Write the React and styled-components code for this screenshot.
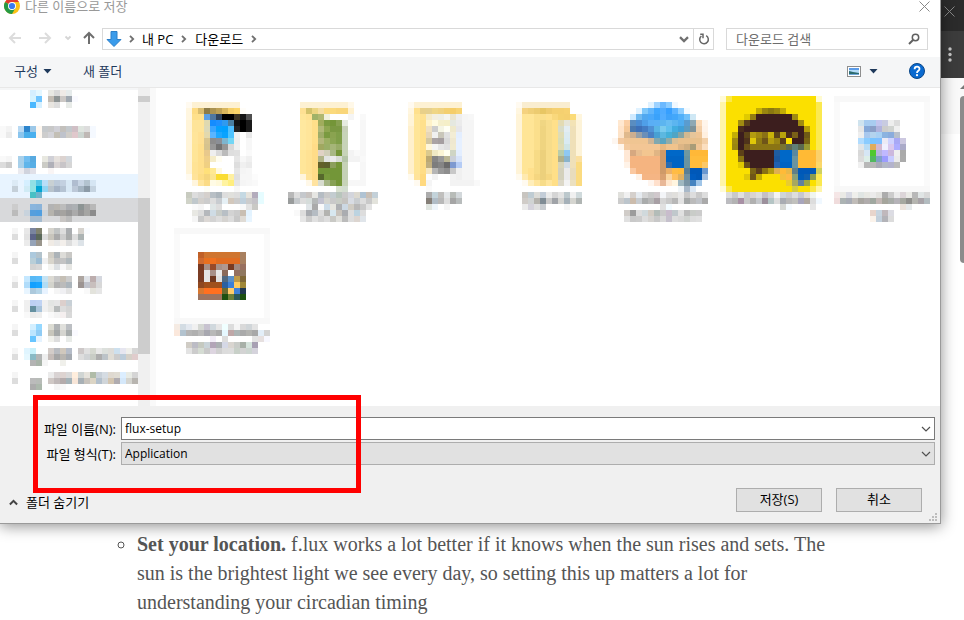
import React, { useState } from 'react';
import styled, { createGlobalStyle } from 'styled-components';

const GlobalStyle = createGlobalStyle`
  * {
    box-sizing: border-box;
  }
  body {
    margin: 0;
    background: #fff;
    overflow: hidden;
    color: #000;
    font-family: 'Open Sans', 'Noto Sans CJK KR', sans-serif;
    font-size: 13px;
    line-height: 18px;
  }
  button,
  input,
  select {
    font: inherit;
    color: inherit;
    margin: 0;
  }
  svg {
    display: block;
    flex: none;
  }
`;

const CELL = 6;

// Every row is a list of colours, "fff*3" repeats one and "." leaves a gap.
const parseRow = (row) =>
  row
    .split(' ')
    .filter(Boolean)
    .flatMap((token) => {
      const [color, times] = token.split('*');
      return Array(Number(times || 1)).fill(color);
    });

const Mosaic = ({ rows, cols, top = 0, left = 0 }) => (
  <svg
    width={cols * CELL}
    height={(rows.length + top) * CELL}
    shapeRendering="crispEdges"
    aria-hidden="true"
  >
    {rows.map((row, y) =>
      parseRow(row).map((color, x) =>
        color === '.' ? null : (
          <rect
            key={`${x}-${y}`}
            x={(x + left) * CELL}
            y={(y + top) * CELL}
            width={CELL}
            height={CELL}
            fill={`#${color}`}
          />
        )
      )
    )}
  </svg>
);

const Page = styled.div`
  display: grid;
  grid-template-columns: minmax(0, 1fr) 23px;
`;

const Dialog = styled.section`
  position: relative;
  z-index: 1;
  background: #fff;
  border-right: 1px solid #9a9a9a;
  border-bottom: 1px solid #9a9a9a;
  box-shadow: 0 2px 14px rgba(0, 0, 0, 0.45);
`;

const TitleBar = styled.header`
  display: flex;
  align-items: center;
  gap: 5px;
  height: 12px;
  margin-bottom: 16px;
  padding: 0 10px 0 4px;
  color: #999;
`;

const Title = styled.span`
  flex: 1;
`;

const IconButton = styled.button`
  display: flex;
  align-items: center;
  justify-content: center;
  width: ${(props) => props.$width}px;
  height: ${(props) => props.$height || 20}px;
  padding: 0;
  border: 0;
  background: none;
`;

const NavBar = styled.nav`
  display: flex;
  height: 22px;
  margin-bottom: 7px;
  padding-right: 12px;
`;

const Address = styled.div`
  flex: 1;
  display: flex;
  align-items: center;
  border: 1px solid #d9d9d9;
  padding-left: 3px;
`;

const Crumb = styled.a`
  color: #000;
  text-decoration: none;
`;

const CrumbArrow = styled.span`
  display: flex;
  justify-content: center;
  width: ${(props) => props.$width || 22}px;
`;

const Spacer = styled.span`
  flex: 1;
`;

const Refresh = styled.span`
  border-left: 1px solid #d9d9d9;
`;

const Search = styled.label`
  display: flex;
  align-items: center;
  width: 202px;
  margin-left: 12px;
  padding: 0 7px 0 9px;
  border: 1px solid #d9d9d9;
`;

const SearchInput = styled.input`
  flex: 1;
  min-width: 0;
  padding: 0;
  border: 0;
  outline: 0;
  background: none;
  &::placeholder {
    color: #6d6d6d;
    opacity: 1;
  }
`;

const Toolbar = styled.div`
  display: flex;
  align-items: center;
  height: 31px;
  padding: 0 15px 2px 14px;
  background: #f5f6f7;
  border-bottom: 1px solid #e8e8e8;
`;

const ToolButton = styled.button`
  display: flex;
  align-items: center;
  gap: 5px;
  margin-right: ${(props) => props.$gap || 0}px;
  padding: 0;
  border: 0;
  background: none;
  color: #1e395b;
`;

const Body = styled.div`
  display: flex;
  height: 318px;
  overflow: hidden;
`;

const Tree = styled.ul`
  width: 138px;
  margin: 0;
  padding: 0;
  border-top: 2px solid #f5f6f7;
  list-style: none;
`;

const TreeItem = styled.li`
  height: ${(props) => props.$height || 24}px;
  background: ${(props) => props.$background || 'none'};
`;

const Track = styled.div`
  width: 18px;
  margin-right: 12px;
  padding-top: 8px;
  background: #f0f0f0;
  border-right: 6px solid #f9f9f9;
`;

const TrackArrow = styled.div`
  height: 6px;
  margin-bottom: 96px;
  background: #cdcdcd;
`;

const TrackThumb = styled.div`
  height: 156px;
  background: #cdcdcd;
`;

const Files = styled.ul`
  flex: 1;
  display: grid;
  grid-template-columns: repeat(auto-fill, 108px);
  grid-auto-rows: 132px;
  margin: 0;
  padding: 8px 0 0;
  list-style: none;
`;

const File = styled.li`
  height: 132px;
`;

const Footer = styled.form`
  position: relative;
  padding: 11px 5px 11px 0;
  background: #f0f0f0;
`;

const Field = styled.div`
  display: flex;
  align-items: center;
  height: 23px;
  margin-bottom: ${(props) => props.$gap}px;
`;

const FieldLabel = styled.label`
  width: 121px;
  padding-right: 5px;
  text-align: right;
`;

const Combo = styled.div`
  flex: 1;
  display: grid;
  align-items: center;
  height: 23px;
  border: 1px solid ${(props) => (props.$filled ? '#adadad' : '#7a7a7a')};
  background: ${(props) => (props.$filled ? '#e1e1e1' : '#fff')};
  font-size: 12px;
  > * {
    grid-area: 1 / 1;
  }
  > svg {
    justify-self: end;
    margin-right: 3px;
    pointer-events: none;
  }
`;

const NameInput = styled.input`
  width: 100%;
  height: 20px;
  padding: 0 20px 0 3px;
  border: 0;
  outline: 0;
  background: none;
`;

const TypeSelect = styled.select`
  width: 100%;
  height: 20px;
  padding: 0 20px 0 3px;
  border: 0;
  outline: 0;
  appearance: none;
  background: none;
`;

const Actions = styled.div`
  display: flex;
  align-items: center;
  gap: 14px;
  padding-right: 13px;
`;

const HideFolders = styled.button`
  display: flex;
  align-items: center;
  gap: 8px;
  margin-right: auto;
  padding: 4px 0 0 9px;
  border: 0;
  background: none;
`;

const PushButton = styled.button`
  width: 86px;
  height: 24px;
  padding: 0 0 2px;
  border: 1px solid #adadad;
  background: #e1e1e1;
`;

const Grip = styled.div`
  position: absolute;
  right: 3px;
  bottom: 2px;
`;

const Highlight = styled.div`
  position: absolute;
  top: -11px;
  left: 33px;
  width: 328px;
  height: 98px;
  border: 5px solid #f00;
  pointer-events: none;
`;

const BrowserEdge = styled.aside`
  display: flex;
  flex-direction: column;
  overflow: hidden;
`;

const TabStrip = styled.div`
  height: 31px;
  padding: 6px 0 0 3px;
  background: #2b2b2b;
`;

const BrowserBar = styled.div`
  height: 47px;
  padding: 16px 0 0 7px;
  background: #3c3c3c;
`;

const PageEdge = styled.div`
  flex: 1;
  display: flex;
  flex-direction: column;
  align-items: flex-end;
  padding-top: 7px;
  background: linear-gradient(#f9f9f9 56px, #fff 56px);
`;

const PageThumb = styled.div`
  width: 4px;
  height: 167px;
  margin-top: 7px;
  border-radius: 4px 0 0 4px;
  background: #8b8b8b;
`;

const Article = styled.article`
  grid-column: 1 / -1;
  padding: 6px 20px 0 137px;
  color: #555;
  font-family: Georgia, 'Liberation Serif', serif;
  font-size: 20px;
  line-height: 29px;
`;

const Tips = styled.ul`
  max-width: 704px;
  margin: 0;
  padding: 0;
  list-style: circle;
`;

const Chevron = ({ size = 8, d = 'M2 0.8 5.2 4 2 7.2', color = '#707070', width = 1.8 }) => (
  <svg width={size} height={size} viewBox="0 0 8 8" fill="none" stroke={color} strokeWidth={width}>
    <path d={d} />
  </svg>
);

const Arrow = ({ color, rotate = 0 }) => (
  <svg width="14" height="14" viewBox="0 0 14 14" fill="none" stroke={color} strokeWidth="2">
    <path d="M13 7H2M7 2 2 7l5 5" transform={`rotate(${rotate} 7 7)`} />
  </svg>
);

const Caret = () => (
  <svg width="9" height="5" viewBox="0 0 9 5" fill="#1e395b">
    <path d="M0.500 0h8L4.500 4.500z" />
  </svg>
);

const Cross = ({ color }) => (
  <svg width="11" height="11" viewBox="0 0 11 11" stroke={color} fill="none">
    <path d="M0.500 0.500l10 10M10.500 0.500l-10 10" />
  </svg>
);

const ComboArrow = () => (
  <svg width="10" height="8" viewBox="0 0 10 8" fill="none" stroke="#505050" strokeWidth="1.2">
    <path d="M1 2l4 4 4-4" />
  </svg>
);

const ChromeLogo = () => (
  <svg width="16" height="16" viewBox="0 0 16 16">
    <circle cx="8" cy="8" r="8" fill="#fbc116" />
    <path d="M8 8 1.070 4A8 8 0 0 1 14.930 4H8z" fill="#e33b2e" />
    <path d="M8 8 1.070 4A8 8 0 0 0 8 16l3.460-6z" fill="#269a45" />
    <circle cx="8" cy="8" r="4" fill="#fff" />
    <circle cx="8" cy="8" r="3.100" fill="#3a7bf0" />
  </svg>
);

const DownloadArrow = () => (
  <svg width="16" height="16" viewBox="0 0 16 16">
    <path d="M5 0.500h6v8h4L8 15.500 1 8.500h4z" fill="#3a9bea" stroke="#2b7fc9" />
  </svg>
);

const RefreshIcon = () => (
  <svg width="12" height="12" viewBox="0 0 12 12" fill="none" stroke="#666" strokeWidth="1.500">
    <path d="M8.200 2.700A4.300 4.300 0 1 1 3.400 3" />
    <path d="M2.200 1.200H5v4" />
  </svg>
);

const SearchIcon = () => (
  <svg width="12" height="12" viewBox="0 0 12 12" fill="none" stroke="#606060">
    <circle cx="7.500" cy="4.500" r="3.200" strokeWidth="1.500" />
    <path d="M5 7 1 11" strokeWidth="2" />
  </svg>
);

const ViewIcon = () => (
  <svg width="14" height="11" viewBox="0 0 14 11">
    <rect x="0.500" y="0.500" width="13" height="10" fill="#fff" stroke="#8e8e8e" />
    <rect x="2" y="2" width="10" height="7" fill="#b5dcf8" />
    <path d="M2 2h10v2H2z" fill="#5b9be8" />
    <path d="M2 5l4 1 6 1v2H2z" fill="#2c6b6f" />
    <path d="M2 8h10v1H2z" fill="#6fa7d8" />
  </svg>
);

const HelpIcon = () => (
  <svg width="16" height="16" viewBox="0 0 16 16">
    <circle cx="8" cy="8" r="7.500" fill="#0a6ad0" stroke="#0b4788" />
    <path
      d="M5.600 6.200c0-3.400 5-3.200 4.900-.3C10.500 7.800 8 7.700 8 9.900"
      fill="none"
      stroke="#fff"
      strokeWidth="1.800"
    />
    <circle cx="8" cy="12.200" r="1.100" fill="#fff" />
  </svg>
);

const MenuDots = () => (
  <svg width="4" height="16" viewBox="0 0 4 16" fill="#c8c8c8">
    <circle cx="2" cy="2" r="1.700" />
    <circle cx="2" cy="7.500" r="1.700" />
    <circle cx="2" cy="13" r="1.700" />
  </svg>
);

const GripDots = () => (
  <svg width="8" height="8" viewBox="0 0 8 8" fill="#bdbdbd">
    <path d="M6 0h2v2H6zM3 3h2v2H3zM6 3h2v2H6zM0 6h2v2H0zM3 6h2v2H3zM6 6h2v2H6z" />
  </svg>
);

const treeItems = [
  {
    height: 30,
    top: 0,
    rows: [
      '.*5 d6efff e5f7ff .*1 e8e8e3 d9d9d9 efeae6 e6ebeb',
      '.*5 d6f3ff 70c5ff . c3bcb3 8e9494 ccc8c5 a0a8b0 fafaff',
      '.*5 4ab8ff d6f0ff . e8e5e0 ddd . e8ebe8',
    ],
  },
  {
    height: 30,
    top: 1,
    rows: [
      'f9f9f9 f3f3f3 . b8d9f3 2c84cc 9cc8e8 fff8f0 c5c9cc c8c8c8 d0d0d6 c3c0bc c3c8cc d0bfc5 dfe5df ddd f5f9ff',
      'f9f9f9 ebebeb . 8ac5ee 48aeea 4ab0ee fff8f0 cdcdcd d3d3d8 c3bfb5 bfc3cc d0cdc8 e0c8cc ccd5d0 bfb8b5 f5f9ff',
    ],
  },
  {
    top: 1,
    rows: [
      'f9f9f9 f5f5f5 . a8d0ea 70bdf0 58aae0 . e8e8e0 d0d0d6 e6e1dd dcd3d0 d3d8dd',
      'dcdcdc ccc . a8d0ea 60b5ea 58aee5 . cbcbc5 b0b0b8 d9d3d3 c8c5c8 d6d6d6',
      '.*3 ebebf0 d0d3dd e0e0e8 .*2 f9f5f5',
    ],
  },
  {
    background: '#e8f4ff',
    top: 1,
    rows: [
      '.*2 dceaf5 . d5efff 90e0e5 58c8e5 b8def8 c8d0d3 bccada c3d0e0 d8e8f5 b0bdd0 c8d5e5 b3c3d0 d5e5f3',
      '.*2 c5d0d9 . d0ebf5 90e3e3 00a5d3 90d5f3 b8c3cc a5b3c5 b5c3d3 d8e8f5 bcc8d8 a5b5c3 8c9ba8 c5d3e0',
      '.*5 48c0c5 70b3cc',
    ],
  },
  {
    background: '#d8d9db',
    top: 1,
    rows: [
      '.*2 ccc .*2 8ab5dd 8ab3d9 . b3b3b3 b8b5b0 bcbcbc aaacb0 acb0b3 8c9494 a5a5a5 b8b8b8',
      '.*2 bbb . c8d3dd 559fdd 509fe0 ccd3d9 b5b3ad a0a0a0 a5a3a0 999 aaa 959595 a5a5a3 8c8c8c',
      '.*5 a5bcd0 a5bcd0 .*3 c8c5c3 bbb',
    ],
  },
  {
    top: 1,
    rows: [
      '.*2 f5f5f5 . e8e8e8 7a859f 80826f . d5d3cc c0c3c3 ddd aaadb0 . d6d3ce fafcff',
      '.*2 ddd . e3e3e3 5c6488 5a6859 ddd c8c5bc aaa cdcdcd aaacac ddd acb3b3',
      '.*4 ebebeb 95a3b8 99958c . f0ebe5 e8e8e8 f3efeb ddd f0f0f0 dde3e8',
    ],
  },
  {
    top: 1,
    rows: [
      '.*2 f5f5f5 .*2 acc9dd b3c3cc . d0cdc5 acb3b8 dddcd8 c9c8c5',
      '.*2 ddd .*2 b8ced8 9cbcd3 f0f0f0 d8d5cc c0c0c0 c3c3c3 b0b8bc',
      '.*5 d3d3d3 d8d8d8 . f3f3f0 dce0e3 f8f8f8 e6e6e3',
    ],
  },
  {
    top: 1,
    rows: [
      '.*2 f5f5f5 . c5e8ff 58b9f5 5abcfa c5e3f3 dcdad3 c8c8c8 c5bfb5 ccc . ada5a0 e0e3e8 bcadad d5d8df',
      '.*2 ddd . b0dcfa 12a0ff 18a5ff b0dcf5 d3d3cc b3b3b3 bbb acb5bc . 9c9492 c0c3cc c8bfbd d8d8d8',
      '.*4 e8f5ff acc9dc b5d5e8 e8f3ff . f5f5f5 f0f0f3 e3e3e3 .*2 f9f9f9 e3e3dc e6e6e6',
    ],
  },
  {
    top: 1,
    rows: [
      '.*2 f5f5f5 . f0f0f0 bdd0f3 c0d3f3 f0f0f0 e3e5e3 e6e6e6 dccfcc c8d0d6',
      '.*2 ddd . f0f0f0 6590a0 aac5dc f0f0f0 e8e8e5 b8bcbc ddd d5d5d5',
      '.*4 f9f9f9 ebebeb eee . f9f9f9 f3f3f3 f5efef d9d9d9',
    ],
  },
  {
    top: 1,
    rows: [
      '.*2 f5f5f5 .*2 d3efff 95d8ff . dcdcd3 b0b3b5 e0e0dc bcbfc3',
      '.*2 ddd .*2 bce5ff 90ccf5 . c8c6bc a5a8a8 d5d5d0 a8adad fafaff',
      '.*5 68c5ff e5f3ff . f0f0eb ddd . e8ebe8',
    ],
  },
  {
    top: 1,
    rows: [
      '.*2 f5f5f5 . e0f5ff c8f0fa .*2 d3ccc8 b8bbc0 d0c8bd b5bcc8 . cdc8c8 e0e0e0 d5d8d0 e8e8e8 dce0dc dddcd8 cde0ee e6e6f0 efefeb d6d6d6',
      '.*2 ddd . e6f8ff 8abac5 b3b5b5 eee c5bcb8 a5a5a5 b8b5b0 a5aab0 . dddddd d0d3d5 c8ccc5 adadad bcc3c8 e0ddd5 ccc bcccda d5d0c8 e0cccc',
      '.*5 b3b3b3 a8b3a8 f5f5f5 .*2 f0f0eb',
    ],
  },
  {
    top: 1,
    rows: [
      '.*2 f5f5f5 .*5 ebebeb d9d3d3 ddd3d0 d9d9d9 ffeedd d0d5d3 e6e3dc b0bca8 c8d0d8 d5dce3 dfd9d0 e0dcd3 dceeff e8ebe5 d5d5d5',
      '.*2 ddd .*2 bbb b8bcb8 . cfc8c5 bfb8b8 b5acac a5b3b8 f8e6d8 a8b0b5 c8c3bc dcd5c5 b3c0cc d0d5d9 d3c5b0 b0acb0 d5e8fa d5d5d0 b8b5b0',
      '.*5 acacac acb8ac .*2 f5f5f5 f9f9f9',
    ],
  },
];

const files = [
  {
    top: 1,
    left: 3,
    rows: [
      'fffaf0 fdf1d3*8',
      'fff6e0 fddb83 d9bd70 8d7c47 ab9350 bea155 d9b75e f5cf69 fdd669 fffdf8',
      'fff6e0 fee08c*2 5aa0e6 4f77a0 2f435c 000*2 3c3423 151515 505050',
      'fff4d8 fee499*2 dfd9b0 148cff 1e90ff 2f9aef 4a7ea0 111 000 1a1a1a',
      'fff4d8 fee499*2 dcd9b8 3aa5ff 05a0ff 00a0ff 4fbfff 222 000 1a1a1a',
      'fff4d8 ffe59a ffe093 e3d9ad 5ab5ff 1ea8ff 08a3ff 4fc4ff f0f0f0 fff e8e8e8',
      'fff4d8 ffe59a ffe093 d9c58f 8c8c8c 8b8f96 7db5cf 73d6f5 eee fff f7f7f7',
      'fff4d8 ffe597 ffdf8c d6c38e 989898 737373 959595 d8d8d8 f0f0f0 fff f7f7f7',
      'fff4d8 ffe597 ffdf8c e8c98c efefef d9d9d9 bbb dedede e0e0e0 fff fafafa',
      'fff4d8 ffe597 ffdf8c efcf88 f5ecc8 fffdf0 fff*2 e6e6e6 f7f7f7 f0f0f0',
      'fff4d8 ffe395 ffdf8c f0d083 fff*4 dedede f0f0f0 ebebeb',
      'fff4d8 ffe395 ffdf8c ffe07a ffe992 fff9e0 fff*2 e6e6e6 f5f5f5 f7f7f7',
      'fffaee ffe39a fddd85 f5d57d fbe590 fadc32*2 fff0a0 e0e0e0 f7f7f7*2 fcfcfc',
      '. fff5dd ffe59c fbdb85 fffbe5 fff9da fff3a0 ffee80 e6e6e6 f5f5f5 f7f7f7 f9f9f9',
      '.*3 fdfdf5 .*4 f7f7f7',
      'c8cbc0 ddd d5d5d5 d5d0cc b8bfc5 acb5bc ddd e0e0dc ddd c5d9e3 e6e3dc b3acbc e6fcff',
      'd0d3c8 c0c8cc d3d0cc ccc ddd c8ccd0 e6f0f5 d3c8bc ccc c0d0dc ccc c5c3c8 e6fcff',
      '. fafafa f5f5f5 . dfe6e6 ddd .*3 f9f9f9 e3e3e3 c9c9c5',
      '. e8e8e3 ddd b5b8bc cfdce5 c8ccc8 b8bfc5 d3d3d3 ccc c9bfb3 e3f3ff',
      '. f5f5f5 c9c9c9 dcd8d5 d3d3d3 ddd d5d3d0 dcdcdc c8c8c8 dfdbd5 e8f5ff',
    ],
  },
  {
    top: 1,
    left: 2,
    rows: [
      '.*2 fdf1d3*8 fff8e8',
      '.*2 fee093 d3c26b ecd581 f5dda0 fbda7d*2 f9d67a*2 fff1cf',
      '.*2 ffe699 ffe293 a0b268 b0b870 f0f0dc fff*3 f5f5f5 fff f9f9f9',
      '.*2 ffe89f ffe59a ffdf8a a0ac5c 7a9a40 749538 86a050 e6ebe0 fff*2 f7f7f7',
      '.*2 ffe89f ffe59a ffdf8a b0b878 8ea650 7a9842*2 c7d0b8 fff*2 f7f7f7',
      '.*2 ffe89f ffe59a ffdf8a 9eac68 7a9a40 8aa350 7f9e48 c7d3b8 fff*2 f7f7f7',
      '.*2 ffe89f ffe59a ffdf8a b3b67b 9caf63 8ba553 7f9e48 c7d3b8 fff*2 f7f7f7',
      '.*2 ffe89f ffe59a ffdc88 a0a860 9aae67 a5b578 98ac68 c7d3b8 fff*2 f7f7f7',
      '.*2 ffe699 ffe293 ffdc88 e0d2c5 d0ceb8 a8b884 759638 c7d3b8 f3f3f3 f9f9f9 f7f7f7',
      '.*2 ffe699 ffe293 ffdc88 b0b488 e2e4e2 ebebeb d8dcd4 b5c5a8 f3f3f3*2 f9f9f9',
      '.*2 ffe699 ffe293 ffdc88 626029 5d5f2c 8c9f5d 759638 c5d1b6 fff*2 f7f7f7',
      '.*2 ffe699 ffe293 ffdc88 739638*4 c5d1b6 fff*2 f7f7f7',
      '.*2 fff5dd ffe39a ffdc88 56682c 789a3c 739638*2 c5d1b6 fff*2 f7f7f7',
      '.*3 fff8e8 ffe3a0 d8dcd0 a5b585 87a055 749538 c7d3b8 f7f7f7*3',
      '.*8 d8e0d0 d3ddd0',
      'b8b8b8 ddd c5c8cc c8c3c0 e6e6e3 b5bcc3 c9c9c9 c3ccd0 b8c5bc c9c9c9 d3d5dc dcd9d0 b0c3d3 c9bfb5 c3d0d8',
      '999c9c c5c9cc ddd d5dcda b5b8b8 c3c3d0 d5d5d0 c9c9c9 c8ccc5 c5c3c0 d8dce3 c9cdd0 ddd c9c9c9 e3e3dc',
      '.*3 e0e5e8 aaa fafafa cddce8 e6e6e0 aeb0b3 ccd8e3 d0ccc3 b8b8b8 c9c9c9 e3e3e3',
      '. f9f9f9 ddd a8abb0 b5bcc3 dcdcdc b3b3b0 d8e8f0 c8c3bc aaacb0 ddd bcd3e0 ddd',
      '.*2 e6e6e6 ccc e0e0e0 d3d3d3 ddd c9c9c5 e0e0dc bbb ddd dcd5d0 e0e5ea',
    ],
  },
  {
    top: 1,
    left: 4,
    rows: [
      'fffaf0 fdf1d3*8',
      'fff6e0 ffe08c e8d08a e6d08e efd686 f0d280 f3cf70 f5cd68 f7d374',
      'fff4d8 ffe597 ffe291 f5ebc8 f3efe0 efefe5 f5f5f0 ebe5ce eee f5f5f5 f7f7f7',
      'fff4d8 ffe597 ffe08c fff2c8 fffbe0 f5efcc f5efc8 e5e8e0 ebebeb f5f5f5*2',
      'fff0cc ffe597 ffe08c efe0c2 cdcdcd f5f5e5 fffff5 efe9cc e6e6ea f5f5f5*2',
      'fff0cc ffe597 ffe08c e6d6b8 f0f0f0 c9c6b9 e0e0e0 f3edd5 e3eeff f5f5f5*2',
      'fff0cc ffe597 ffe08c d3c7a2 aaa3a5 a59ea0 d9d9d9 efe8d0 e6f0ff f5f5f5*2',
      'fff0cc ffe597 ffe08c fff7dc f5f5f5 e6e6e6 e0e0e0 f0ead0 e6f0ff f5f5f5*2',
      'fff0cc ffe597 ffdd86 dbc98e efe9c5 fbf5d5 fffff0 cfd5c5 e3eeff f5f5f5*2',
      'fff0cc ffe597 ffdd86 bba873 858585 999 bab694 cbd0d9 d6e3fa f5f5f5*2',
      'fff0cc ffe597 ffdd86 bfae80 7d7d7d 858585 6b6b6b 7d99d0 b5ccf5 f5f5f5*2',
      'fff0cc ffe597 ffdd86 f5e6c0 b5b5b5 999 8e8e8e c8c8c8 f0f0f0 f5f5f5*2',
      'fffaee ffe39a ffd97e fdfdfd f3f3f3 fff*2 f3f3f3 f0f0f0 f5f5f5*2',
      '. fffaf0 ffd980 f5f5f5 fff*3 f3f3f3*4 f9f9f9',
      '.*3 fafafa',
      '.*3 acacac c3d3da c0bfbd e3e6e8 b8bcb8 d3d8db',
      '.*3 857f78 b0bcc6 b8b8b8 ddd a5a5a5 b8bcbc',
      '.*3 e0e5e0 eef5fb . f5f5f5',
    ],
  },
  {
    top: 1,
    left: 4,
    rows: [
      'fffaf0 f9edd0*8',
      'fff6e0 f5d27f f0cf77 eccb70 e8c663 efcb6e f5d070*2 f7d271',
      'fff4d8 ffe596*2 fbdf8c*2 ffe08a f9d87c f5d270 f5d070 fbdb77 fff6dd',
      'fff4d8 ffe596*2 fbdf8c f0d683 f7dc8a ffe08a e3dbb3 e6e5d8 f3e3b5 fdf3d8',
      'fff4d8 ffe596*2 fbdf8c efd480 f7dc8a ffe08a d9dcc8 e3edf2 efe0b8 fdf3d8',
      'fff4d8 ffe596*2 fbdf8c efd480 f7dc8a ffe08a e0dcb5 dcebf0 efe0b8 fdf3d8',
      'fff4d8 ffe596*2 fbdf8c efd480 f7dc8a ffe08a d9dcb5 d9eaf2 efe0b8 fdf3d8',
      'fff4d8 ffe596*2 fbdf8c efd480 f7dc8a ffe08a e0dcb5 d0e5e5 efe0b8 fdf3d8',
      'fff4d8 ffe596*2 f7db86 ecd07c f7dc8a ffdf88 b8ccab 8ec8f3 efe0b8 fdf3d8',
      'fff4d8 ffe596*2 f7db86 ecd07c f7dc8a ffdf88 b0b08c 8ab4cc efe0b8 fbe0a0',
      'fff4d8 ffe596*2 f7db86 ecd07c f7dc8a ffdf88 d8d5b8 d3dde6 efe0b8 fbdb80',
      'fff4d8 ffe596 ffe08c f7db86 ecd07c f7dc8a ffdf88 d3d0bc eaeaea e8dcbc fbdb80',
      'fffaee ffeab0 ffe08c f5d680 ecd07c f5d680 ffdf88 d3d0bc eaeaea e8dcbc fbdb80',
      '. fffaf0 ffeebb ffe59c f7dc8a ffe59c ffdf88 dcd8c8 f3f3f3 ebe0c0 fbdb80',
      '',
      '. c8c5c0 bfccd3 dcdcd8 c3cdd8 ebebeb d5d5d5 e3e3e3 bcc8cc f0f0f0 d0dadc',
      '. d0ccc8 d0d3d3 b5b3ad 7f8c95 c9c9c9 a0a3a8 d3d3d0 a5b0b8 d5d5d0 b0b5b3',
      '. ebebeb d5d3dc e0e0e0 c8ccd0 .*3 f5f5f5',
    ],
  },
  {
    top: 1,
    left: 2,
    rows: [
      '.*6 e0f2ff 9dd2ff 6cb9ff 8cccff f0f8ff',
      '.*4 e0f2ff 7fc8fb 60b5fb 3da6ff 4fabff 369fff 5cb3ff 90cfff f3faff',
      '.*3 cfeaff 6fb9f0 50a8f0 4aa9fa 3aa2fa 52adff 3fa3fa 42a7fa 50b0fa 6fc0fa cfe8f5',
      '. ffe8d0 fbcfa5 5a8dc0 4a8cd3 4f9fe8 5aaef5 5ab0f5 5cb5f0 68bdf3 5cb5f0 4fadf0 5a9ccf 8fa8b3 fbd9b5 fff5eb',
      '. ffe3c8 f5c898 4a78ad 3d70b8 447cc3 4f92d6 5ab5e5 7acbee 60c0ee 42ade0 3fa0d8 5c9bc0 7f9298 f3cfa8 fff3e8',
      '. fde3c8 e0b98c ccae90 97a0a8 6b8fb8 4a80c3 48a0d3 5cb8e0 45b0d8 4fa5c5 85a5a5 d3b990 e6c59a efc595 fff0e0',
      'fdf6f0 f3c9a0 f0c595 f0c592*3 d0b595 80a8b0 5aa5c0 90aca8 d9bf95 e8c08c*4 f3d0a8',
      '. fff5eb f3caa0 f3c695*5 e8b880 f0c38c*2 dcb585 cfae80 a89c78 efc595 fbdfc0',
      '.*2 ffe8d5 d6a880 e8bd8f f3c690*2 e0b584 cf9a68 0068c8*3 6f98a0 ffb838*3',
      '.*2 ffe8d5 f5b480*5 cf9a68 0064c3*3 6a94a0 ffbc3c*3',
      '.*2 fff3e8 f5b480*5 cf9a68 2a6cb0 0064c3*2 6a94a0 ffbc3c*2 fbc868',
      '.*3 fbc8a0 f5b480*4 cf9a68 ecb068 ffbc45 ffbc3c 5a7f95 0058b8*2 6a98d0',
      '.*4 fff3e8 f5b584*3 d9a070 fbd5a0 ffc060 e0b060 7090a0 005cbf 0058b8 a5c0e0',
      '.*6 fff5ee ffe0cc e8b898 ffe8d0 fff5e0 a0b8c0 7a95a5 4583c0 a0c5e8',
      '.*11 f0f5f8 a8b8c8 dde8f3',
      '. e0e0dc f0f0f0 d5d0cc e6ebf0 d5d5d5 c9c9c9 d0c8cc f3f5f8 ddd e0dfdc e8e8e8 c8c8c8 ddd c9c9c9 ddd',
      '. ccc bcc5cc ccbcac c8ccd0 aaacac b8b8b8 a8a0a5 d5d5d5 c9c9c9 b8b8b8 e3e3e3 a5a8a8 bbb c0c3c8 aaa',
      '.*8 e0e0e0 f3fbff',
      '.*2 d0ccc8 9c9c9c ddd d0d9dc d3ccc3 b3bcb8 c9c9c9 c8bccc c0c8cc e0e0e0 bbb c9ccc8 ccc',
      '.*2 e0e0e0 c9c9c9 ccc ddd d5d3d0 c8c8c8 d9d9d9 c5c0cc ddd d8d8d8 d0d3d0 ddd e0e0e0',
    ],
  },
  {
    left: 2,
    rows: [
      'fffbd8 fbe84a fbe000*14 fffbd0',
      'fff5a8 fbe000*15 fbe94f',
      'fff5a8 fbe000*5 c3ad05 9a860f 8a7810 9a8610 c3ad05 fbe000*5 fbe94f',
      'fff5a8 fbe000*3 e0ca00 947d12 3c1e1e*6 a08b10 fbe000*3 fbe94f',
      'fff5a8 fbe000*2 a08c10 5a3f1a 3c1e1e*8 a08c10 fbe000*2 fbe94f',
      'fff5a8 fbe000*2 4a2c1c 3c1e1e*10 b39d08 fbe000 fbe94f',
      'fff5a8 fbe000 c3ad05 3c1e1e 5c4418 b39c10 a08810 8a7015 c8b20a 5c4418 b8a20c 4a2c1c 7a6018 3c1e1e 6f5a15 fbe000 fbe94f',
      'fff5a8 fbe000 a08a10 3c1e1e 4f331b e0c808 8f7a12 6f5518 b39c10 9a8512 5a3f1a fbe000 3c1e1e*2 7a6512 fbe000 fbe94f',
      'fff5a8 fbe000 9a8610 3c1e1e 6a5018 8a7414*5 7a7430 5f6a50 5f7f78 5a6a50 9a9a30 fbe000 fbe94f',
      'fff5a8 fbe000*2 5c4018 3c1e1e*5 1f5ca0 0068c8*2 5a88a0 ffba35*3 fbd06a',
      'fff5a8 fbe000*2 8a7412 3c1e1e*5 1a58a0 0068c8*2 6a94a0 ffba35*3 fbd06a',
      'fff5a8 fbe000*2 e0c800 6a5018 3c1e1e*4 2060b0 0064c3*2 6a94a0 ffba35*3 fbd86a',
      'fff5a8 fbe000*4 7a6415 5a3c1c 8a7212 b39c10 dfb050 ffba38 e8b848 607f88 0058b8*3 cfd060',
      'fff5a8 fbe000*3 e0c808 6f5518 c3ad05 fbe000*3 f3c040 ffba45 88a078 005cb8 1060b0 8a9c50 fbe94f',
      'fff5a8 fbe000*10 e8cc30 a8a860 6080a0 a0a840 fbe000 fbe94f',
      'fffbd8 fbe84a fbe000*10 d5cc40 fbe000*2 fbe84a fff5a8',
      '. ddd c9c9c9 e0e0e0 c9c9cc d9d3d0 ddd c5c0c5 d3d3d3 f3f3f3 cfd5d8 ccc ddd c8c8d0 e3dcd5 f0f5f0',
      '. bcbcc0 b3b3b3 a890a5 c9c9c9 b0b0b0 c5c8cc 9c909c b5c5c5 ddd a8acb3 b8b8b8 c0c0bc a8a5bc b0a8a0 ddd f0f8ff',
      '.*10 d5d8d5 f5fbff .*3 e6e6e6',
    ],
  },
  {
    left: 3,
    rows: [
      'f8f8f8*16',
      ...Array(3).fill('fafafa fff*14 fafafa'),
      'fafafa fff*3 cfe3ee a8ccf0*2 c3c5ee c8cbe0 eee ddd fff*4 fafafa',
      'fafafa fff*3 e6e6e6 85a8d8 8a9fc8 b0b3dd ccc d0d3d0 f0f0f0 fff*4 fafafa',
      'fafafa fff*3 eee a8c8ee b3d3ee a8d0f3 8cb3e0 8aacdd b8c0cc fff*4 fafafa',
      'fafafa fff*3 b0dcff 8accff 78c3ff 80bfff eceaf5 cfd3ff a8a8f5 ccc8e0 fff*3 fafafa',
      'fafafa fff*3 e0e5e8 b8dcf5 e0ac5c d3b8d0 f0f0ff d9c8ee adadff aaaac8 fff*3 fafafa',
      'fafafa fff*3 d8d8d8 d6e6f5 4fc830 b8b3e0 c0b8ff ccb8dd efefef aaa fff*3 fafafa',
      'fafafa fff*3 dcdcdc ddeee8 52b860 80a0c8 9c9cff c8ccff ebebeb ababab fff*3 fafafa',
      'fafafa fff*3 f0f0f0 b8b8b8*2 aaaab8 b3b8c8 b3b3cc bbb fff*4 fafafa',
      ...Array(3).fill('fafafa fff*14 fafafa'),
      'f8f8f8*16',
      'f5e6e6 eaeae6 d8dae3 efefeb e0e5e3 e8e8e3 ebebeb e3e3e0 acacac ccc ebebeb dcd5d8 eaeae6 b8b8b8 e0e5e5 d9d9d9',
      'f0dcdc acb3b3 a8acb5 c0bcb8 a8a5a0 b0acac a0a8a0 c3b8b5 a5a59c a8aca8 b5b3b8 a5a8a0 8f8f8c b5b5b0 a8a3a8 b3bcc0',
      '.*11 ebe3dc e6eaeb',
      '.*6 e8d5cc c8d5e0 c0b8bc dcdce3',
      '.*6 fbf3eb c3d0dc b3b3b8 dcdcdc',
    ],
  },
  {
    left: 1,
    rows: [
      'f8f8f8*16',
      ...Array(3).fill('fafafa fff*14 fafafa'),
      'fafafa fff*3 c06028 cf7530*6 a88060 fff*3 fafafa',
      'fafafa fff*3 cf6a30 e87020 f07020 e06c22*4 a88060 fff*3 fafafa',
      'fafafa fff*3 783820 a89088 984a2a a89088 b09890 783a22 a08880 987060 fff*3 fafafa',
      'fafafa fff*3 7a3c24 e6e6e6 a89088 e8e8e8 8a6a5a fff 947060 907860 fff*3 fafafa',
      'fafafa fff*3 7a3c24 e6e6e6 703820 e0e0e0 4f6880 5a90c8 c09a48 806838 fff*3 fafafa',
      'fafafa fff*3 8f4820 a0501c*3 2a60a0 3c80d8 ffcc60 a08838 fff*3 fafafa',
      'fafafa fff*3 d87830 ff7020*3 6a6a30 ffcc6a 3f80d8 203850 fff*3 fafafa',
      'fafafa fff*3 9c7460*4 1c5010 6f8038 2c5858 1c5010 fff*3 fafafa',
      ...Array(3).fill('fafafa fff*14 fafafa'),
      'f8f8f8*16',
      'f5ebe3 d3dce3 e3e8ef f0f0f0 d5d8d3 c8c3d0 d0d8dd e6e6e6 f0ffff dcdcdc f5f5f5 d9d9d9 d0d5d8 e3e3e3',
      'fbe8dc b3c3cf b5b5b5 b0b0b0 bbb a8a8b0 b8b8b8 acacac e6f8ff bfa8a8 adb5b5 aaa b3b3b0 a8a8a8 e3eef8 d3d3d3',
      '.*6 f3eef8 . ddd .*4 e3e3e3 e6e0e0 f8f8ff',
      '.*2 d0ccc5 bcbcc5 c5c9c0 c9d3d8 b3a5b8 acb0b3 d5d8e6 d9d5d0 c9ccc8 a8b0a8 d5e3dc a8a0b3',
      '.*2 e3e3e3 ccc d5dcd3 c9c9c9 ddd5e0 d0d0d0 dcdcdc ddd c8d0c8 d3d3d3 ccd5d0 d5d3dc',
    ],
  },
];

export default () => {
  const [fileName, setFileName] = useState('flux-setup');

  return (
    <>
      <GlobalStyle />
      <Page>
        <Dialog role="dialog" aria-label="다른 이름으로 저장">
          <TitleBar>
            <ChromeLogo />
            <Title>다른 이름으로 저장</Title>
            <IconButton $width={11} $height={11} aria-label="닫기">
              <Cross color="#888" />
            </IconButton>
          </TitleBar>

          <NavBar>
            <IconButton $width={30} aria-label="뒤로">
              <Arrow color="#dcdcdc" />
            </IconButton>
            <IconButton $width={30} aria-label="앞으로">
              <Arrow color="#dcdcdc" rotate={180} />
            </IconButton>
            <IconButton $width={16} aria-label="최근 위치">
              <Chevron d="M1.500 2.500 4 5 6.500 2.500" color="#d5d5d5" />
            </IconButton>
            <IconButton $width={26} aria-label="위로">
              <Arrow color="#6e6e6e" rotate={90} />
            </IconButton>
            <Address>
              <DownloadArrow />
              <CrumbArrow $width={20}>
                <Chevron />
              </CrumbArrow>
              <Crumb href="#pc">내 PC</Crumb>
              <CrumbArrow>
                <Chevron />
              </CrumbArrow>
              <Crumb href="#downloads">다운로드</Crumb>
              <CrumbArrow>
                <Chevron />
              </CrumbArrow>
              <Spacer />
              <IconButton $width={18} aria-label="이전 위치">
                <Chevron size={10} d="M0.800 2.500 4 5.700 7.200 2.500" />
              </IconButton>
              <Refresh>
                <IconButton $width={19} aria-label="새로 고침">
                  <RefreshIcon />
                </IconButton>
              </Refresh>
            </Address>
            <Search>
              <SearchInput type="text" placeholder="다운로드 검색" aria-label="다운로드 검색" />
              <SearchIcon />
            </Search>
          </NavBar>

          <Toolbar>
            <ToolButton $gap={31}>
              구성 <Caret />
            </ToolButton>
            <ToolButton>새 폴더</ToolButton>
            <Spacer />
            <ToolButton $gap={29} aria-label="보기">
              <ViewIcon />
              <CrumbArrow $width={14}>
                <Caret />
              </CrumbArrow>
            </ToolButton>
            <IconButton $width={16} aria-label="도움말">
              <HelpIcon />
            </IconButton>
          </Toolbar>

          <Body>
            <Tree>
              {treeItems.map((item, i) => (
                <TreeItem key={i} $height={item.height} $background={item.background}>
                  <Mosaic rows={item.rows} cols={23} top={item.top} />
                </TreeItem>
              ))}
            </Tree>
            <Track>
              <TrackArrow />
              <TrackThumb />
            </Track>
            <Files>
              {files.map((file, i) => (
                <File key={i}>
                  <Mosaic rows={file.rows} cols={19} top={file.top} left={file.left} />
                </File>
              ))}
            </Files>
          </Body>

          <Footer onSubmit={(e) => e.preventDefault()}>
            <Field $gap={2}>
              <FieldLabel htmlFor="file-name">파일 이름(N):</FieldLabel>
              <Combo>
                <NameInput
                  id="file-name"
                  type="text"
                  value={fileName}
                  onChange={(e) => setFileName(e.target.value)}
                />
                <ComboArrow />
              </Combo>
            </Field>
            <Field $gap={23}>
              <FieldLabel htmlFor="file-type">파일 형식(T):</FieldLabel>
              <Combo $filled>
                <TypeSelect id="file-type">
                  <option>Application</option>
                </TypeSelect>
                <ComboArrow />
              </Combo>
            </Field>
            <Actions>
              <HideFolders type="button">
                <Chevron size={9} d="M0.800 5.700 4 2.500 7.200 5.700" color="#444" />
                폴더 숨기기
              </HideFolders>
              <PushButton type="submit">저장(S)</PushButton>
              <PushButton type="button">취소</PushButton>
            </Actions>
            <Grip>
              <GripDots />
            </Grip>
            <Highlight />
          </Footer>
        </Dialog>

        <BrowserEdge>
          <TabStrip>
            <Cross color="#888" />
          </TabStrip>
          <BrowserBar>
            <MenuDots />
          </BrowserBar>
          <PageEdge>
            <svg width="4" height="4" viewBox="0 0 4 4" fill="#777">
              <path d="M4 0v4H0z" />
            </svg>
            <PageThumb />
          </PageEdge>
        </BrowserEdge>

        <Article>
          <Tips>
            <li>
              <b>Set your location.</b> f.lux works a lot better if it knows when the sun rises and
              sets. The sun is the brightest light we see every day, so setting this up matters a
              lot for understanding your circadian timing
            </li>
          </Tips>
        </Article>
      </Page>
    </>
  );
};
